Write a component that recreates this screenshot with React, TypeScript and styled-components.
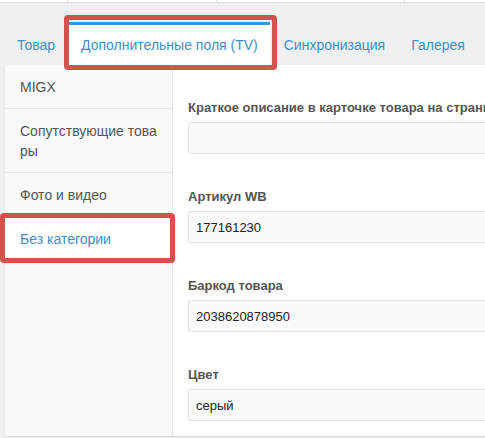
import React from "react";
import styled, { createGlobalStyle } from "styled-components";

const GlobalStyle = createGlobalStyle`
  html, body {
    margin: 0;
    padding: 0;
    background: #f0f0f0;
    overflow: hidden;
    font-family: "Liberation Sans", Arial, sans-serif;
  }
`;

const Page = styled.div`
  position: relative;
  width: 485px;
  height: 438px;
  overflow: hidden;
`;

const TopStrip = styled.div`
  display: flex;
  height: 2px;
  background: #fff;
  border-bottom: 1px solid #e2e2e2;
`;

const StripCell = styled.div<{ $w: number }>`
  width: ${({ $w }) => $w}px;
  border-right: 1px solid #dcdcdc;
`;

const TabBar = styled.div`
  display: flex;
  gap: 2px;
  padding: 19px 0 0 5px;
`;

const Tab = styled.div<{ $active?: boolean }>`
  padding: 10px 12px;
  font-size: 14px;
  line-height: 20px;
  color: #3d8fcc;
  white-space: nowrap;
  border-top: 3px solid ${({ $active }) => ($active ? "#3a95d3" : "transparent")};
  background: ${({ $active }) => ($active ? "#fff" : "transparent")};
`;

const Panel = styled.div`
  display: flex;
  width: 800px;
  height: 371px;
  margin-left: 5px;
  background: #fff;
  border-radius: 3px;
  box-shadow: 0 1px 2px rgba(0, 0, 0, 0.12);
  overflow: hidden;
`;

const Sidebar = styled.div`
  width: 167px;
  flex-shrink: 0;
  background: #f9f9f9;
  border-right: 1px solid #e4e4e4;
`;

const SideItem = styled.div<{ $active?: boolean }>`
  padding: 12px 15px 11px;
  font-size: 14px;
  line-height: 20px;
  word-break: break-all;
  color: ${({ $active }) => ($active ? "#3d8fcc" : "#555")};
  background: ${({ $active }) => ($active ? "#fff" : "transparent")};
  border-bottom: 1px solid #e6e6e6;
`;

const Content = styled.div`
  flex: 1;
  padding: 34px 15px 0;
`;

const Field = styled.div`
  margin-bottom: 34px;
`;

const Label = styled.div`
  font-size: 13px;
  font-weight: bold;
  line-height: 18px;
  color: #555;
  margin-bottom: 5px;
  white-space: nowrap;
`;

const Input = styled.div`
  box-sizing: border-box;
  height: 32px;
  padding: 0 7px;
  display: flex;
  align-items: center;
  font-size: 13px;
  color: #222;
  background: #fafafa;
  border: 1px solid #e2e2e2;
  border-radius: 3px;
`;

const Marker = styled.div`
  position: absolute;
  box-sizing: border-box;
  border: 5px solid #d3524a;
  border-radius: 4px;
  pointer-events: none;
`;

const tabs = ["Товар", "Дополнительные поля (TV)", "Синхронизация", "Галерея"];
const groups = ["MIGX", "Сопутствующие товары", "Фото и видео", "Без категории"];
const fields = [
  { label: "Краткое описание в карточке товара на странице каталога", value: "" },
  { label: "Артикул WB", value: "177161230" },
  { label: "Баркод товара", value: "2038620878950" },
  { label: "Цвет", value: "серый" },
];

export default function App() {
  return (
    <Page>
      <GlobalStyle />
      <TopStrip>
        <StripCell $w={67} />
        <StripCell $w={148} />
        <StripCell $w={187} />
      </TopStrip>
      <TabBar>
        {tabs.map((t, i) => (
          <Tab key={t} $active={i === 1}>
            {t}
          </Tab>
        ))}
      </TabBar>
      <Panel>
        <Sidebar>
          {groups.map((g, i) => (
            <SideItem key={g} $active={i === 3}>
              {g}
            </SideItem>
          ))}
        </Sidebar>
        <Content>
          {fields.map((f) => (
            <Field key={f.label}>
              <Label>{f.label}</Label>
              <Input>{f.value}</Input>
            </Field>
          ))}
        </Content>
      </Panel>
      <Marker style={{ left: 64, top: 15, width: 213, height: 55 }} />
      <Marker style={{ left: 0, top: 213, width: 175, height: 50 }} />
    </Page>
  );
}
